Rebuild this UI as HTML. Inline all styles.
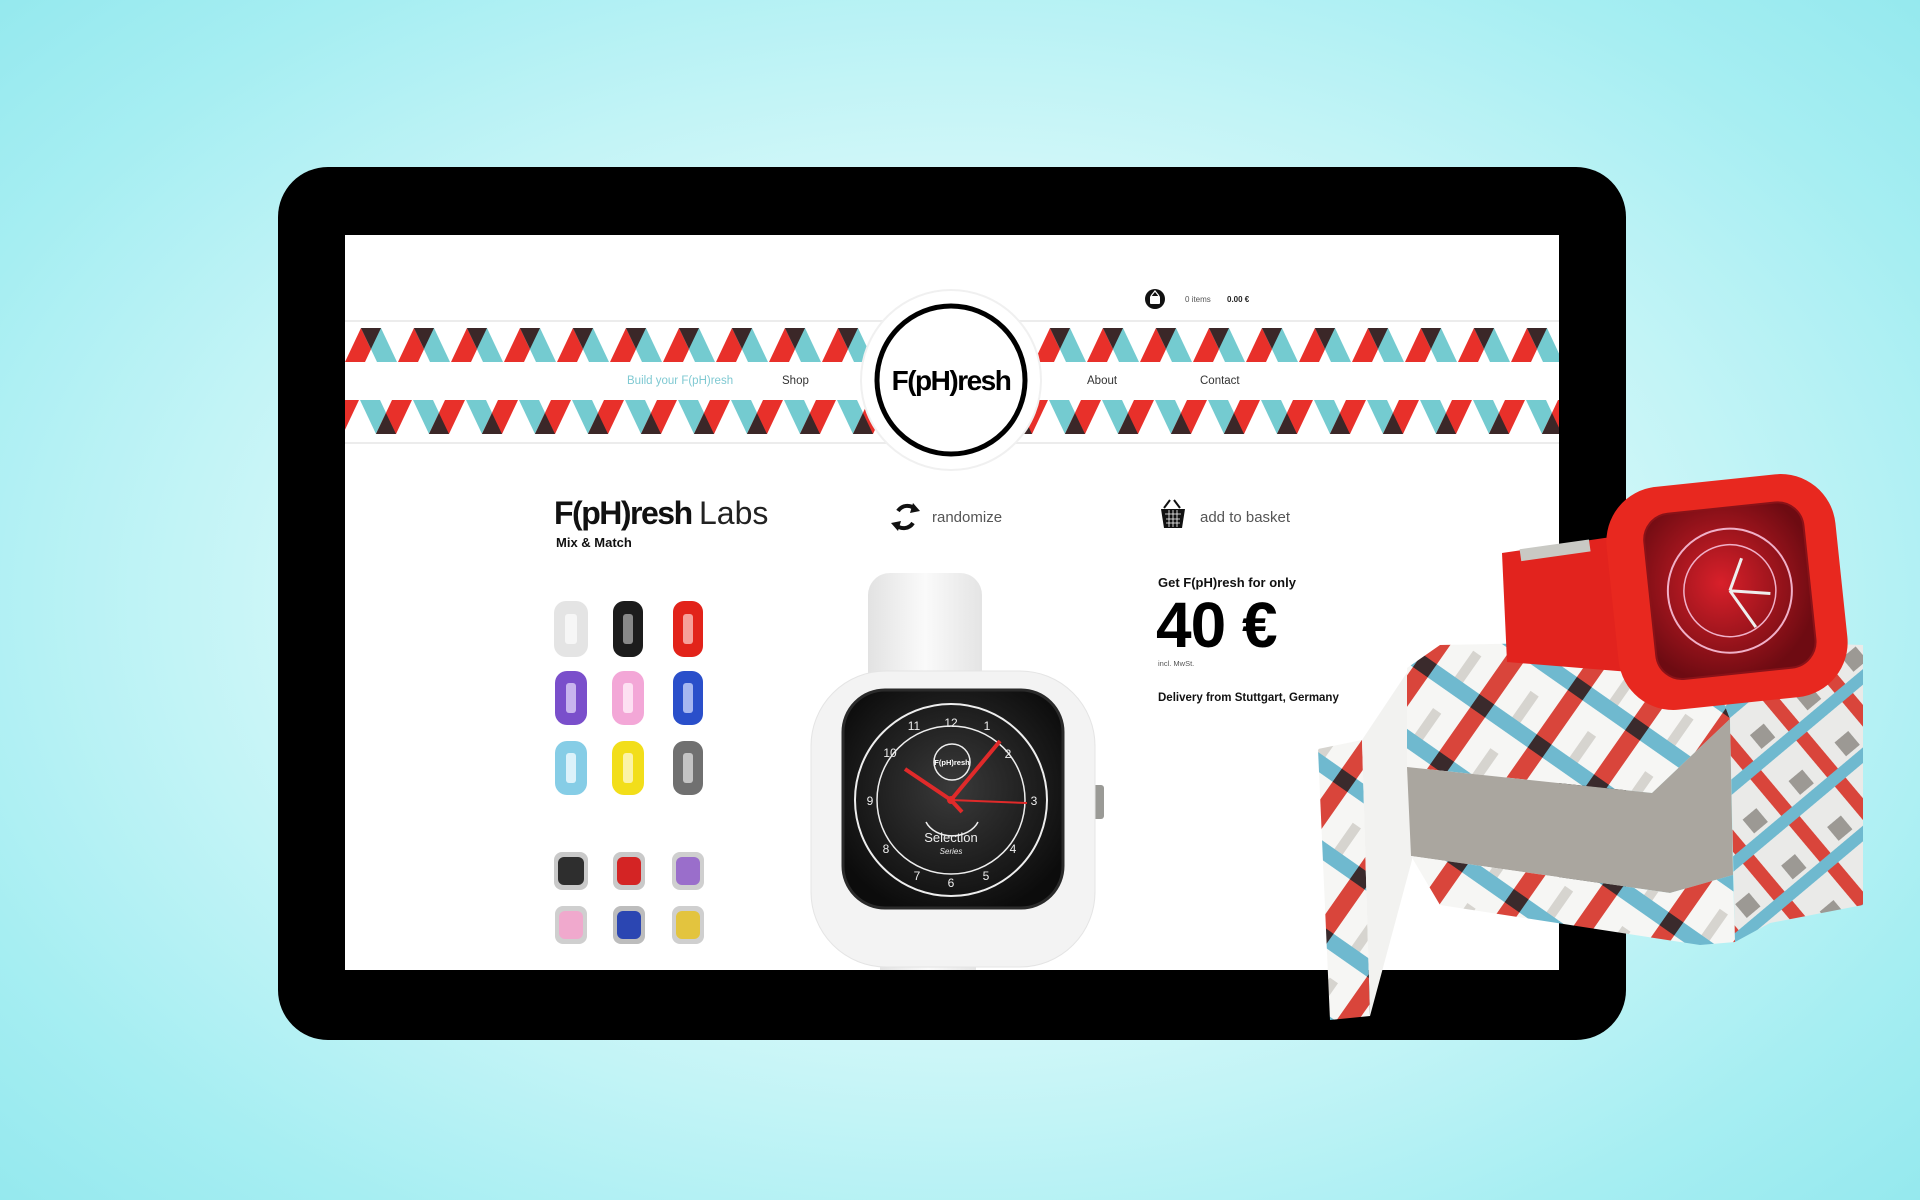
<!DOCTYPE html>
<html><head><meta charset="utf-8"><style>
html,body{margin:0;padding:0;width:1920px;height:1200px;overflow:hidden}
body{background:radial-gradient(ellipse 75% 80% at 50% 50%,#f4fdfd 0%,#d6f8f9 40%,#a6eef2 75%,#8ce6ec 100%)}
svg{position:absolute;left:0;top:0}
text{font-family:"Liberation Sans",sans-serif}
</style></head><body>
<svg width="1920" height="1200" viewBox="0 0 1920 1200">
<defs>
<pattern id="bandTop" x="345" y="328" width="53" height="34" patternUnits="userSpaceOnUse">
<polygon points="0,34 20,34 36,0 16,0" fill="#e8302a"/>
<polygon points="16,0 36,0 52,34 32,34" fill="#74cbd0"/>
<polygon points="16,0 36,0 26,21" fill="#3b2728"/>
</pattern>
<pattern id="bandBot" x="360" y="400" width="53" height="34" patternUnits="userSpaceOnUse">
<polygon points="0,0 20,0 36,34 16,34" fill="#74cbd0"/>
<polygon points="16,34 36,34 52,0 32,0" fill="#e8302a"/>
<polygon points="16,34 36,34 26,13" fill="#3b2728"/>
</pattern>
<pattern id="box" width="70" height="70" patternUnits="userSpaceOnUse" patternTransform="rotate(35)">
<rect width="70" height="70" fill="#f6f6f4"/>
<rect x="0" y="0" width="18" height="70" fill="#d9453b"/>
<rect x="0" y="0" width="70" height="16" fill="#6fb9cf"/>
<rect x="0" y="0" width="18" height="16" fill="#3a2a2c"/>
<rect x="40" y="38" width="10" height="32" fill="#c9c6c0" opacity=".7"/>
</pattern>
<pattern id="box2" width="60" height="60" patternUnits="userSpaceOnUse" patternTransform="rotate(-40)">
<rect width="60" height="60" fill="#eaeae8"/>
<rect x="0" y="0" width="14" height="60" fill="#d9453b"/>
<rect x="0" y="30" width="60" height="12" fill="#6fb9cf"/>
<rect x="28" y="8" width="18" height="18" fill="#9c9994"/>
</pattern>
<radialGradient id="redface" cx="45%" cy="45%" r="60%"><stop offset="0" stop-color="#d8202a"/><stop offset="1" stop-color="#6e0b12"/></radialGradient>
<radialGradient id="blackface" cx="50%" cy="45%" r="60%"><stop offset="0" stop-color="#3a3a3a"/><stop offset="1" stop-color="#0c0c0c"/></radialGradient>
<linearGradient id="strapW" x1="0" x2="1"><stop offset="0" stop-color="#e2e2e2"/><stop offset=".5" stop-color="#fafafa"/><stop offset="1" stop-color="#e4e4e4"/></linearGradient>
</defs>

<rect x="278" y="167" width="1348" height="873" rx="50" fill="#000"/>
<rect x="345" y="235" width="1214" height="735" fill="#fff"/>

<line x1="345" y1="321" x2="1559" y2="321" stroke="#ececec" stroke-width="2"/>
<line x1="345" y1="443" x2="1559" y2="443" stroke="#ececec" stroke-width="2"/>
<rect x="345" y="328" width="1214" height="34" fill="url(#bandTop)"/>
<rect x="345" y="400" width="1214" height="34" fill="url(#bandBot)"/>
<circle cx="951" cy="380" r="90" fill="#fff" stroke="#f0f0f0" stroke-width="2"/>
<circle cx="951" cy="380" r="74" fill="#fff" stroke="#000" stroke-width="5"/>
<text x="951" y="390" text-anchor="middle" font-size="28" font-weight="bold" letter-spacing="-1.5">F(pH)resh</text>

<text x="627" y="384" font-size="11.5" fill="#7fc9d2">Build your F(pH)resh</text>
<text x="782" y="384" font-size="11.5" fill="#333">Shop</text>
<text x="1087" y="384" font-size="11.5" fill="#333">About</text>
<text x="1200" y="384" font-size="11.5" fill="#333">Contact</text>

<circle cx="1155" cy="299" r="10" fill="#111"/>
<rect x="1150" y="296" width="10" height="8" fill="#fff" rx="1"/>
<path d="M1151 296 L1155 291 L1159 296" stroke="#fff" fill="none" stroke-width="1.2"/>
<text x="1185" y="302" font-size="8" fill="#555">0 items</text>
<text x="1227" y="302" font-size="8" font-weight="bold" fill="#222">0.00 €</text>

<text x="554" y="524" font-size="32" font-weight="bold" letter-spacing="-1.5" fill="#111">F(pH)resh <tspan font-weight="normal" letter-spacing="0" fill="#222">Labs</tspan></text>
<text x="556" y="547" font-size="13" font-weight="bold" fill="#111">Mix &amp; Match</text>

<path d="M898 511 A11 11 0 0 1 915 509" stroke="#111" stroke-width="4" fill="none"/>
<polygon points="913,503 920,511 910,513" fill="#111"/>
<path d="M913 523 A11 11 0 0 1 896 525" stroke="#111" stroke-width="4" fill="none"/>
<polygon points="898,531 891,523 901,521" fill="#111"/>
<text x="932" y="522" font-size="15" fill="#555">randomize</text>

<path d="M1164 508 L1170 500 M1180 508 L1174 500" stroke="#111" stroke-width="2"/>
<polygon points="1161,509 1185,509 1182,528 1164,528" fill="#111"/>
<path d="M1165 514 H1181 M1166 519 H1180 M1166 523 H1180 M1169 510 V527 M1173 510 V527 M1177 510 V527" stroke="#fff" stroke-width="0.8"/>
<text x="1200" y="522" font-size="15" fill="#555">add to basket</text>

<text x="1158" y="587" font-size="13" font-weight="bold" fill="#111">Get F(pH)resh for only</text>
<text x="1156" y="647" font-size="64" font-weight="bold" fill="#000" letter-spacing="-1">40 €</text>
<text x="1158" y="666" font-size="7.5" fill="#555">incl. MwSt.</text>
<text x="1158" y="701" font-size="11.5" font-weight="bold" fill="#111">Delivery from Stuttgart, Germany</text>

<g>
<g transform="translate(571,629)"><rect x="-17" y="-28" width="34" height="56" rx="12" fill="#e4e4e4"/><rect x="-6" y="-15" width="12" height="30" rx="3" fill="#f6f6f6"/></g>
<g transform="translate(628,629)"><rect x="-15" y="-28" width="30" height="56" rx="11" fill="#1c1c1c"/><rect x="-5" y="-15" width="10" height="30" rx="3" fill="#888"/></g>
<g transform="translate(688,629)"><rect x="-15" y="-28" width="30" height="56" rx="11" fill="#e2231a"/><rect x="-5" y="-15" width="10" height="30" rx="3" fill="#f6a09a"/></g>
<g transform="translate(571,698)"><rect x="-16" y="-27" width="32" height="54" rx="12" fill="#7a4fcb"/><rect x="-5" y="-15" width="10" height="30" rx="3" fill="#c8b4ee"/></g>
<g transform="translate(628,698)"><rect x="-16" y="-27" width="32" height="54" rx="12" fill="#f3a7d7"/><rect x="-5" y="-15" width="10" height="30" rx="3" fill="#fde0f2"/></g>
<g transform="translate(688,698)"><rect x="-15" y="-27" width="30" height="54" rx="11" fill="#2a4fca"/><rect x="-5" y="-15" width="10" height="30" rx="3" fill="#a6b6f0"/></g>
<g transform="translate(571,768)"><rect x="-16" y="-27" width="32" height="54" rx="12" fill="#86cde6"/><rect x="-5" y="-15" width="10" height="30" rx="3" fill="#dcf2fa"/></g>
<g transform="translate(628,768)"><rect x="-16" y="-27" width="32" height="54" rx="12" fill="#f2de1a"/><rect x="-5" y="-15" width="10" height="30" rx="3" fill="#fbf3a8"/></g>
<g transform="translate(688,768)"><rect x="-15" y="-27" width="30" height="54" rx="11" fill="#707070"/><rect x="-5" y="-15" width="10" height="30" rx="3" fill="#c4c4c4"/></g>
</g>
<g>
<g transform="translate(571,871)"><rect x="-17" y="-19" width="34" height="38" rx="8" fill="#c9c9c9"/><rect x="-13" y="-14" width="26" height="28" rx="6" fill="#2e2e2e"/></g>
<g transform="translate(629,871)"><rect x="-16" y="-19" width="32" height="38" rx="8" fill="#c9c9c9"/><rect x="-12" y="-14" width="24" height="28" rx="6" fill="#d42424"/></g>
<g transform="translate(688,871)"><rect x="-16" y="-19" width="32" height="38" rx="8" fill="#cfcfcf"/><rect x="-12" y="-14" width="24" height="28" rx="6" fill="#9a6ecb"/></g>
<g transform="translate(571,925)"><rect x="-16" y="-19" width="32" height="38" rx="8" fill="#cfcfcf"/><rect x="-12" y="-14" width="24" height="28" rx="6" fill="#f0a9cd"/></g>
<g transform="translate(629,925)"><rect x="-16" y="-19" width="32" height="38" rx="8" fill="#bdbdbd"/><rect x="-12" y="-14" width="24" height="28" rx="6" fill="#2b46b2"/></g>
<g transform="translate(688,925)"><rect x="-16" y="-19" width="32" height="38" rx="8" fill="#cfcfcf"/><rect x="-12" y="-14" width="24" height="28" rx="6" fill="#e3c43e"/></g>
</g>

<rect x="868" y="573" width="114" height="160" rx="22" fill="url(#strapW)"/>
<rect x="880" y="900" width="96" height="70" fill="url(#strapW)"/>
<rect x="1092" y="785" width="12" height="34" rx="3" fill="#9a9a96"/>
<rect x="811" y="671" width="284" height="296" rx="75" fill="#f3f3f3" stroke="#e4e4e4"/>
<rect x="843" y="690" width="220" height="218" rx="42" fill="url(#blackface)" stroke="#2a2a2a" stroke-width="3"/>
<circle cx="951" cy="800" r="96" fill="none" stroke="#eee" stroke-width="2"/>
<circle cx="951" cy="800" r="74" fill="none" stroke="#eee" stroke-width="1.5"/>
<circle cx="952" cy="762" r="18" fill="none" stroke="#eee" stroke-width="1.5"/>
<text x="952" y="765" text-anchor="middle" font-size="7.5" font-weight="bold" fill="#fff">F(pH)resh</text>
<path d="M926 822 A28 22 0 0 0 978 822" stroke="#eee" stroke-width="1.5" fill="none"/>
<text x="951" y="842" text-anchor="middle" font-size="13" fill="#eee">Selection</text>
<text x="951" y="854" text-anchor="middle" font-size="8" font-style="italic" fill="#eee">Series</text>
<g fill="#eee" font-size="12" text-anchor="middle">
<text x="951" y="727">12</text><text x="951" y="887">6</text><text x="1034" y="805">3</text><text x="870" y="805">9</text>
<text x="1008" y="758">2</text><text x="1013" y="853">4</text><text x="986" y="880">5</text><text x="917" y="880">7</text><text x="886" y="853">8</text><text x="890" y="757">10</text><text x="914" y="730">11</text><text x="987" y="730">1</text>
</g>
<path d="M951 800 L1027 803" stroke="#e02a2a" stroke-width="2"/>
<path d="M951 800 L1000 741" stroke="#e02a2a" stroke-width="4"/>
<path d="M951 800 L905 769" stroke="#e02a2a" stroke-width="4"/>
<path d="M951 800 L962 812" stroke="#e02a2a" stroke-width="4"/>
<circle cx="951" cy="800" r="4" fill="#e02a2a"/>

<polygon points="1318,749 1362,740 1370,1016 1330,1020" fill="url(#box)"/>
<polygon points="1362,740 1410,668 1412,860 1370,1016" fill="#f2f2f0"/>
<polygon points="1407,668 1440,645 1700,640 1730,719 1652,793 1407,767" fill="url(#box)"/>
<polygon points="1407,767 1652,793 1730,719 1733,875 1670,893 1411,856" fill="#aaa69f"/>
<polygon points="1411,856 1670,893 1733,875 1735,942 1700,945 1440,905" fill="url(#box)"/>
<polygon points="1730,719 1700,640 1863,645 1863,905 1770,923 1735,942" fill="url(#box2)"/>

<polygon points="1502,553 1625,535 1630,672 1507,662" fill="#e2231e"/>
<rect x="1520" y="545" width="70" height="12" fill="#c9c9c4" transform="rotate(-8 1550 550)"/>
<g transform="rotate(-6 1727 592)">
<rect x="1612" y="480" width="230" height="224" rx="55" fill="#e8281f"/>
<rect x="1650" y="508" width="160" height="166" rx="26" fill="url(#redface)" stroke="#8a1218" stroke-width="2"/>
<circle cx="1730" cy="591" r="62" fill="none" stroke="#f0b0c8" stroke-width="2"/>
<circle cx="1730" cy="591" r="46" fill="none" stroke="#f0b0c8" stroke-width="1.5"/>
<path d="M1730 591 L1770 598 M1730 591 L1752 630 M1730 591 L1745 560" stroke="#eee" stroke-width="3"/>
</g>
</svg>
</body></html>
